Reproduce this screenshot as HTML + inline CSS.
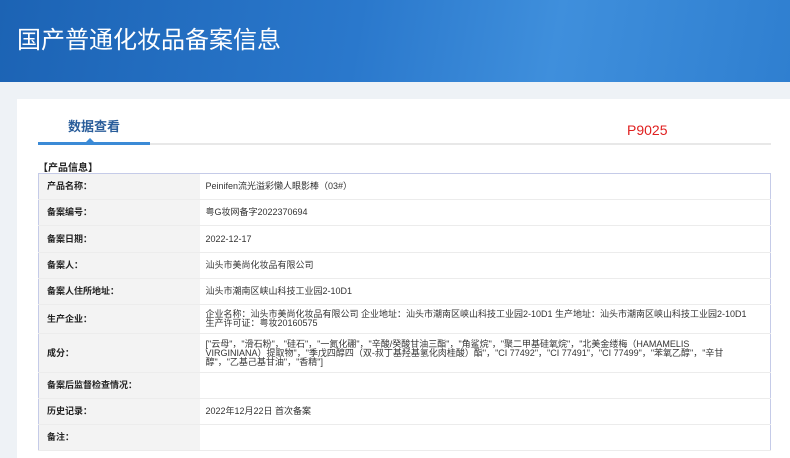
<!DOCTYPE html>
<html><head><meta charset="utf-8"><style>
*{margin:0;padding:0;box-sizing:border-box}
body{width:790px;height:458px;overflow:hidden;background:#eef2f6;font-family:"Liberation Sans","Noto Sans CJK SC",sans-serif;position:relative}
.hd{position:absolute;left:0;top:0;width:790px;height:82px;background:linear-gradient(100deg,#1c63b4 0%,#2a78cc 45%,#3f8fdc 70%,#2f7fd0 100%)}
.hd h1{position:absolute;left:17px;top:20px;font-size:24px;font-weight:normal;color:#fff;letter-spacing:0px}
.card{position:absolute;left:17px;top:99px;width:773px;height:359px;background:#fff}
.tab{position:absolute;left:68px;top:116px;font-size:13px;font-weight:bold;color:#2a5d9a}
.line{position:absolute;left:38px;top:143px;width:733px;height:2px;background:#e8e8e8}
.line2{position:absolute;left:38px;top:142px;width:112px;height:3px;background:#3b8ad6}
.tri{position:absolute;left:86px;top:138px;width:0;height:0;border-left:4px solid transparent;border-right:4px solid transparent;border-bottom:4px solid #3b8ad6}
.p{position:absolute;left:627px;top:122px;font-size:14px;color:#e02020}
.sec{position:absolute;left:38px;top:159px;font-size:10px;font-weight:bold;color:#222}
table{position:absolute;left:38px;top:173px;width:733px;border-collapse:collapse;border:1px solid #c5cbe8;font-size:9px;color:#333}
td{border-bottom:1px solid #ececec;vertical-align:middle;line-height:9px}
td.l{width:161px;background:#f3f3f3;padding-left:8px;font-weight:bold;color:#222}
td.v{padding-left:6px}
</style></head><body>
<div class="hd"><h1>国产普通化妆品备案信息</h1></div>
<div class="card"></div>
<div class="tab">数据查看</div>
<div class="line"></div><div class="line2"></div><div class="tri"></div>
<div class="p">P9025</div>
<div class="sec">【产品信息】</div>
<table>
<tr style="height:26px"><td class="l">产品名称：</td><td class="v">Peinifen流光溢彩懒人眼影棒（03#）</td></tr>
<tr style="height:26px"><td class="l">备案编号：</td><td class="v">粤G妆网备字2022370694</td></tr>
<tr style="height:27px"><td class="l">备案日期：</td><td class="v">2022-12-17</td></tr>
<tr style="height:26px"><td class="l">备案人：</td><td class="v">汕头市美尚化妆品有限公司</td></tr>
<tr style="height:26px"><td class="l">备案人住所地址：</td><td class="v">汕头市潮南区峡山科技工业园2-10D1</td></tr>
<tr style="height:29px"><td class="l">生产企业：</td><td class="v">企业名称：汕头市美尚化妆品有限公司 企业地址：汕头市潮南区峡山科技工业园2-10D1 生产地址：汕头市潮南区峡山科技工业园2-10D1<br>生产许可证：粤妆20160575</td></tr>
<tr style="height:39px"><td class="l">成分：</td><td class="v">["云母"，"滑石粉"，"硅石"，"一氮化硼"，"辛酸/癸酸甘油三酯"，"角鲨烷"，"聚二甲基硅氧烷"，"北美金缕梅（HAMAMELIS<br>VIRGINIANA）提取物"，"季戊四醇四（双-叔丁基羟基氢化肉桂酸）酯"，"CI 77492"，"CI 77491"，"CI 77499"，"苯氧乙醇"，"辛甘<br>醇"，"乙基己基甘油"，"香精"]</td></tr>
<tr style="height:26px"><td class="l">备案后监督检查情况：</td><td class="v"></td></tr>
<tr style="height:26px"><td class="l">历史记录：</td><td class="v">2022年12月22日 首次备案</td></tr>
<tr style="height:26px"><td class="l">备注：</td><td class="v"></td></tr>
</table>
</body></html>
